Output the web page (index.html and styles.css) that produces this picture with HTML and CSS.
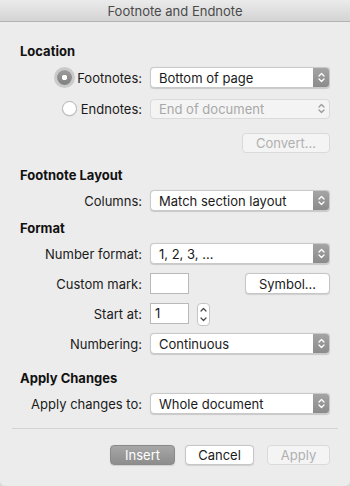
FILE: index.html
```html
<!DOCTYPE html>
<html lang="en">
<head>
  <meta charset="UTF-8" />
  <meta name="viewport" content="width=device-width, initial-scale=1.0" />
  <title>Footnote and Endnote</title>
  <link rel="stylesheet" href="styles.css">
</head>
<body>
  <div class="window">
    <div class="titlebar">Footnote and Endnote</div>

    <div class="content">
      <div class="heading first">Location</div>

      <div class="row r-foot">
        <label class="label">
          <span class="radio checked"></span>Footnotes:
        </label>
        <div class="popup">
          <span>Bottom of page</span>
          <span class="arrows"><svg width="9" height="13" viewBox="0 0 9 13"><path d="M2 5 L4.5 2.5 L7 5 M2 8 L4.5 10.5 L7 8" /></svg></span>
        </div>
      </div>

      <div class="row r-end">
        <label class="label">
          <span class="radio"></span>Endnotes:
        </label>
        <div class="popup disabled">
          <span>End of document</span>
          <span class="arrows"><svg width="9" height="13" viewBox="0 0 9 13"><path d="M2 5 L4.5 2.5 L7 5 M2 8 L4.5 10.5 L7 8" /></svg></span>
        </div>
      </div>

      <div class="row r-convert">
        <div class="label"></div>
        <div class="control end">
          <button class="btn disabled convert">Convert...</button>
        </div>
      </div>

      <div class="heading h-layout">Footnote Layout</div>

      <div class="row r-tight">
        <div class="label">Columns:</div>
        <div class="popup">
          <span>Match section layout</span>
          <span class="arrows"><svg width="9" height="13" viewBox="0 0 9 13"><path d="M2 5 L4.5 2.5 L7 5 M2 8 L4.5 10.5 L7 8" /></svg></span>
        </div>
      </div>

      <div class="heading h-format">Format</div>

      <div class="row r-tight">
        <div class="label">Number format:</div>
        <div class="popup">
          <span>1, 2, 3, …</span>
          <span class="arrows"><svg width="9" height="13" viewBox="0 0 9 13"><path d="M2 5 L4.5 2.5 L7 5 M2 8 L4.5 10.5 L7 8" /></svg></span>
        </div>
      </div>

      <div class="row r-step">
        <div class="label">Custom mark:</div>
        <div class="control split">
          <div class="field"></div>
          <button class="btn symbol">Symbol...</button>
        </div>
      </div>

      <div class="row r-step">
        <div class="label">Start at:</div>
        <div class="control">
          <div class="field">1</div>
          <div class="stepper"><svg width="13" height="23" viewBox="0 0 13 23"><path d="M4 8 L6.5 5.5 L9 8 M4 15 L6.5 17.5 L9 15" /></svg></div>
        </div>
      </div>

      <div class="row r-step">
        <div class="label">Numbering:</div>
        <div class="popup">
          <span>Continuous</span>
          <span class="arrows"><svg width="9" height="13" viewBox="0 0 9 13"><path d="M2 5 L4.5 2.5 L7 5 M2 8 L4.5 10.5 L7 8" /></svg></span>
        </div>
      </div>

      <div class="heading h-apply">Apply Changes</div>

      <div class="row r-tight">
        <div class="label">Apply changes to:</div>
        <div class="popup">
          <span>Whole document</span>
          <span class="arrows"><svg width="9" height="13" viewBox="0 0 9 13"><path d="M2 5 L4.5 2.5 L7 5 M2 8 L4.5 10.5 L7 8" /></svg></span>
        </div>
      </div>

      <div class="separator"></div>

      <div class="actions">
        <button class="btn default insert">Insert</button>
        <button class="btn cancel">Cancel</button>
        <button class="btn disabled apply">Apply</button>
      </div>
    </div>
  </div>
</body>
</html>
```

FILE: styles.css
```css
body, html {
  margin: 0;
  padding: 0;
  background: #d8d8d8;
  font-family: 'Inter', 'Liberation Sans', sans-serif;
  font-size: 13px;
  color: #1a1a1a;
}

.window {
  width: 350px;
  height: 486px;
  background: #ececec;
  border-radius: 0 0 5px 5px;
  overflow: hidden;
}

.titlebar {
  height: 21px;
  line-height: 22px;
  text-align: center;
  color: #4a4a4a;
  background: linear-gradient(#ebebeb, #d4d4d4);
  border-bottom: 1px solid #b3b3b3;
}

.content {
  padding: 0 20px;
}

.heading {
  font-weight: 700;
  height: 16px;
  line-height: 16px;
  color: #111;
}
.heading.first { margin-top: 21px; }
.h-layout { margin-top: 14px; }
.h-format { margin-top: 9px; }
.h-apply { margin-top: 16px; }

.row {
  display: flex;
  align-items: center;
  height: 21px;
  gap: 8px;
}
.r-foot { margin-top: 8px; }
.r-end { margin-top: 10px; }
.r-convert { margin-top: 14px; height: 20px; }
.r-tight { margin-top: 7px; }
.r-step { margin-top: 9px; }

.label {
  width: 122px;
  flex-shrink: 0;
  display: flex;
  align-items: center;
  justify-content: flex-end;
  white-space: nowrap;
}

.control {
  width: 180px;
  display: flex;
  align-items: center;
  gap: 8px;
}
.control.end { justify-content: flex-end; }
.control.split { justify-content: space-between; }

.radio {
  width: 14px;
  height: 14px;
  border-radius: 50%;
  border: 1px solid #b5b5b5;
  background: #fff;
  margin-right: 4px;
  box-sizing: border-box;
  box-shadow: 0 0.5px 1px rgba(0, 0, 0, 0.12);
}
.r-end .radio {
  width: 15px;
  height: 15px;
}
.radio.checked {
  width: 15px;
  height: 15px;
  border: none;
  margin-right: 5px;
  background: radial-gradient(circle, #fff 0 2.5px, transparent 3px), linear-gradient(#9c9c9c, #808080);
  box-shadow: 0 0 0 3px rgba(140, 140, 140, 0.35);
}

.popup {
  width: 180px;
  height: 21px;
  box-sizing: border-box;
  display: flex;
  align-items: center;
  justify-content: space-between;
  background: #fff;
  border: 1px solid #c9c9c9;
  border-radius: 4px;
  box-shadow: 0 0.5px 1px rgba(0, 0, 0, 0.15);
  padding-left: 8px;
  overflow: hidden;
}
.arrows {
  width: 16px;
  align-self: stretch;
  display: flex;
  align-items: center;
  justify-content: center;
  background: linear-gradient(#a4a4a4, #8b8b8b);
}
.arrows path {
  fill: none;
  stroke: #fff;
  stroke-width: 1.3;
  stroke-linecap: round;
  stroke-linejoin: round;
}
.popup.disabled {
  height: 20px;
  background: #f4f4f4;
  border-color: #dadada;
  box-shadow: none;
  color: #a8a8a8;
}
.popup.disabled .arrows {
  background: none;
}
.popup.disabled .arrows path {
  stroke: #9a9a9a;
}

.field {
  width: 39px;
  height: 21px;
  box-sizing: border-box;
  background: #fff;
  border: 1px solid #b9b9b9;
  padding-left: 4px;
  line-height: 19px;
}

.stepper {
  width: 13px;
  height: 23px;
  margin-top: 2px;
  box-sizing: border-box;
  background: #fff;
  border: 1px solid #c6c6c6;
  border-radius: 4px;
  display: flex;
}
.stepper svg {
  margin: -1px;
}
.stepper path {
  fill: none;
  stroke: #444;
  stroke-width: 1.2;
  stroke-linecap: round;
  stroke-linejoin: round;
}

.btn {
  font-family: inherit;
  font-size: 13px;
  height: 21px;
  padding: 0;
  box-sizing: border-box;
  background: #fff;
  color: #1a1a1a;
  border: 1px solid #c6c6c6;
  border-radius: 4px;
  box-shadow: 0 0.5px 1px rgba(0, 0, 0, 0.12);
}
.btn.disabled {
  height: 20px;
  background: #f4f4f4;
  border-color: #dadada;
  box-shadow: none;
  color: #b0b0b0;
}
.btn.default {
  background: linear-gradient(#a7a7a7, #8d8d8d);
  border-color: #8a8a8a;
  color: #fff;
}
.convert { width: 88px; }
.symbol { width: 85px; }

.separator {
  height: 1px;
  background: #d3d3d3;
  margin: 14px -8px 0;
}

.actions {
  margin-top: 16px;
  display: flex;
  justify-content: flex-end;
}
.insert { width: 65px; height: 20px; }
.cancel { width: 69px; height: 20px; margin-left: 10px; }
.apply { width: 63px; margin-left: 13px; }
```
